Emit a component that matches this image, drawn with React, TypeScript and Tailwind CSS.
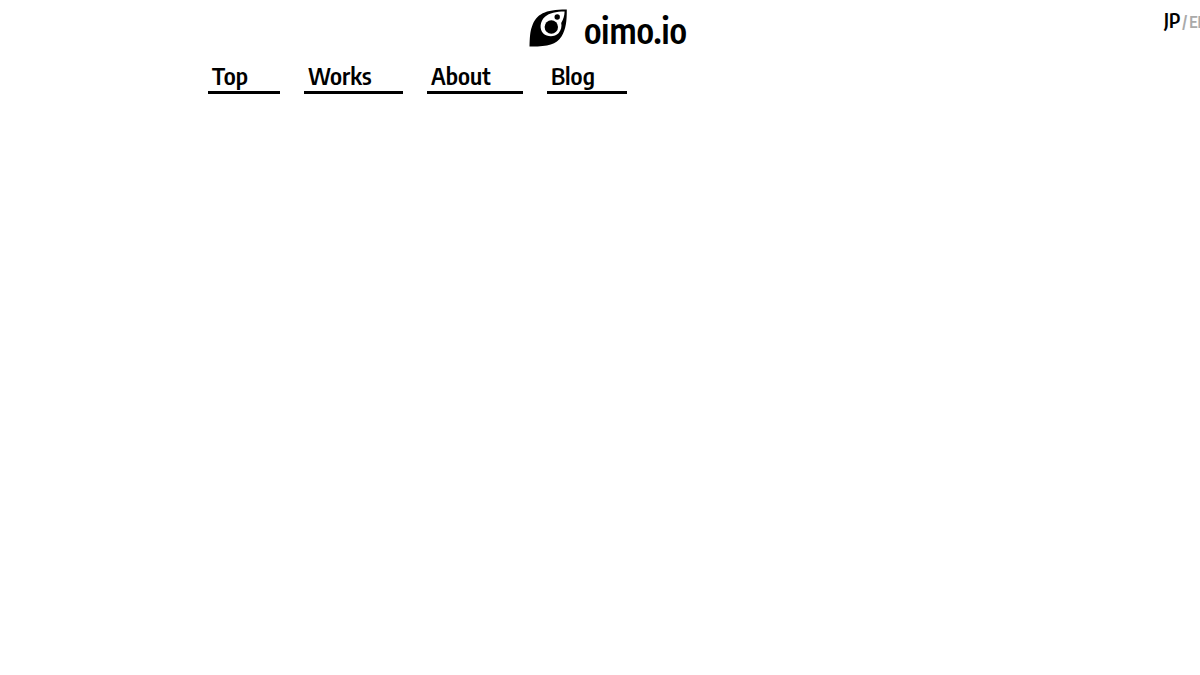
type NavItem = {
  label: string;
  href: string;
  width: string;
};

const NAV: NavItem[] = [
  { label: "Top", href: "/", width: "w-[72px]" },
  { label: "Works", href: "/works", width: "w-[99px]" },
  { label: "About", href: "/about", width: "w-24" },
  { label: "Blog", href: "/blog", width: "w-20" },
];

function Logo() {
  return (
    <svg viewBox="0 0 40 40" className="h-10 w-10 shrink-0" aria-hidden="true">
      <path
        d="M1.5 38.5C1.8 30 1.9 24 4 18.5C8.5 6 17 1.5 38.8 1.6C38.8 13 38 21.5 33.5 28.5C28 37 19 38.7 1.5 38.5Z"
        fill="#000"
      />
      <path
        d="M36.6 3.6C28 3.6 21.5 5 17 8.8C11.8 13.3 11.2 21.3 15.3 25.4C19.5 29.3 26.8 29 30.5 25.2C33.2 22.3 34 18.3 33.2 15C35.4 11.5 36.4 8 36.6 3.6Z"
        fill="#fff"
      />
      <circle cx="23.3" cy="19" r="6.7" fill="#000" />
      <circle cx="29.2" cy="9" r="2.7" fill="#000" />
    </svg>
  );
}

export default function App() {
  return (
    <div className="min-h-screen overflow-x-hidden bg-white font-['Encode_Sans_Condensed','Open_Sans_Condensed',sans-serif] text-black">
      <header className="grid grid-cols-[1fr_auto_1fr] pl-4">
        <h1 className="col-start-2 pt-2">
          <a href="/" className="flex h-12 w-40 gap-4">
            <Logo />
            <span className="text-[35px] leading-11 font-semibold">oimo.io</span>
          </a>
        </h1>
        <div className="flex w-9 items-baseline gap-0.5 justify-self-end pt-2 whitespace-nowrap">
          <button type="button" className="text-xl leading-6 font-semibold">
            JP
          </button>
          <span className="text-base leading-6 font-semibold text-[#aaa]">/</span>
          <button type="button" className="text-base leading-6 font-semibold text-[#aaa]">
            EN
          </button>
        </div>
      </header>

      <nav className="mx-auto flex max-w-[800px] flex-wrap gap-6 px-2 pt-[5px]">
        {NAV.map((item) => (
          <a
            key={item.label}
            href={item.href}
            className={`${item.width} border-b-3 border-black pb-0.5 pl-1 text-2xl leading-7 font-semibold`}
          >
            {item.label}
          </a>
        ))}
      </nav>
    </div>
  );
}
